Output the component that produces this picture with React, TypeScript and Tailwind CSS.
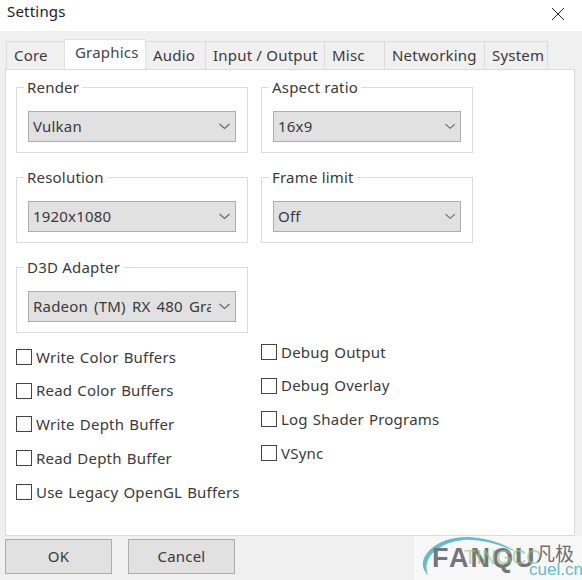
const tabs = ["Core", "Graphics", "Audio", "Input / Output", "Misc", "Networking", "System"];
const tabWidths = [59, 82, 61, 120, 61, 101, 64];

const leftChecks = [
  "Write Color Buffers",
  "Read Color Buffers",
  "Write Depth Buffer",
  "Read Depth Buffer",
  "Use Legacy OpenGL Buffers",
];
const rightChecks = ["Debug Output", "Debug Overlay", "Log Shader Programs", "VSync"];

function Combo({ value }: { value: string }) {
  return (
    <div className="h-[31px] flex items-center justify-between bg-[#e1e1e1] border border-[#adadad] pl-1 pr-[5px] [word-spacing:2px]">
      <span className="overflow-hidden whitespace-nowrap w-[178px]">{value}</span>
      <svg width="11" height="7" viewBox="0 0 11 7" fill="none" stroke="#666" strokeWidth="1.1">
        <path d="M.5 1l5 4.500 5-4.500" />
      </svg>
    </div>
  );
}

function Group({ title, value }: { title: string; value: string }) {
  return (
    <div className="relative h-[66px] border border-[#dcdcdc] pt-[23px] px-[11px]">
      <span className="absolute left-[7px] top-[-10px] h-[18px] leading-[18px] bg-white px-[3px]">{title}</span>
      <Combo value={value} />
    </div>
  );
}

function Check({ label }: { label: string }) {
  return (
    <div className="h-[16px] flex items-center gap-[4px] whitespace-nowrap [word-spacing:1px]">
      <span className="w-[16px] h-[16px] shrink-0 bg-white border border-[#444]" />
      <span>{label}</span>
    </div>
  );
}

export default function App() {
  return (
    <div className="w-[582px] h-[580px] relative overflow-hidden bg-[#f0f0f0] text-[15px] text-[#3a3a3a] font-['Noto_Sans',sans-serif] tracking-[0.2px]">
      <header className="h-[31px] bg-white flex items-center justify-between pl-[7px] pr-[17px] pb-[9px]">
        <span className="text-[#222]">Settings</span>
        <svg width="14" height="14" viewBox="0 0 14 14" stroke="#222" strokeWidth="1" fill="none" className="mt-[5px]">
          <path d="M1 1l12 12M13 1L1 13" />
        </svg>
      </header>

      <div className="pl-[7px] pr-[7px] flex items-end h-[38px]">
        {tabs.map((tab, i) => (
          <div
            key={tab}
            style={{ width: tabWidths[i] }}
            className={
              tab === "Graphics"
                ? "h-[30px] bg-white border border-b-0 border-[#e2e2e2] -ml-px pl-[10px] leading-[25px] z-10 text-[#444] shrink-0"
                : "h-[28px] bg-[#f0f0f0] border border-b-0 border-[#dcdcdc] -ml-px pl-[7px] leading-[26px] shrink-0"
            }
          >
            {tab}
          </div>
        ))}
      </div>

      <main className="w-[570px] h-[467px] ml-[5px] bg-white border border-[#dcdcdc] pl-[10px] pt-[17px]">
        <div className="grid grid-cols-[232px_212px] gap-x-[13px] gap-y-[24px] pb-[24px]">
          <Group title="Render" value="Vulkan" />
          <Group title="Aspect ratio" value="16x9" />
          <Group title="Resolution" value="1920x1080" />
          <Group title="Frame limit" value="Off" />
          <Group title="D3D Adapter" value="Radeon (TM) RX 480 Graphics" />
        </div>
        <div className="grid grid-cols-[245px_1fr] -mt-[20px]">
          <div className="flex flex-col gap-[17.700px] pt-[12px]">
            {leftChecks.map((c) => (
              <Check key={c} label={c} />
            ))}
          </div>
          <div className="flex flex-col gap-[17.700px] pt-[7px]">
            {rightChecks.map((c) => (
              <Check key={c} label={c} />
            ))}
          </div>
        </div>
      </main>

      <footer className="flex gap-[16px] pl-[5px] pt-[3px]">
        <button className="w-[107px] h-[35px] bg-[#e1e1e1] border border-[#adadad] text-center">OK</button>
        <button className="w-[107px] h-[35px] bg-[#e1e1e1] border border-[#adadad] text-center">Cancel</button>
      </footer>

      {/* watermark */}
      <div className="absolute left-[414px] top-[536px] w-[168px] h-[44px] bg-[#f8f8f8] font-['Liberation_Sans',sans-serif] tracking-normal">
        <svg className="absolute left-0 top-0" width="168" height="44" viewBox="0 0 168 44" fill="none">
          <path d="M14 39C-1 26 18 0 55 1C72 2 90 7 102 16C85 8 65 3 50 4C25 6 7 22 14 39Z" fill="#62bccb" />
        </svg>
        <span className="absolute left-[18px] top-[6px] text-[27px] leading-[32px] font-bold text-[#77747a] tracking-[2px]">FANQU</span>
        <span className="absolute left-[50px] top-[9px] text-[20px] leading-[24px] text-[#8ec98a]/70">TINGCO</span>
        <span className="absolute left-[122px] top-[5px] text-[19px] leading-[24px] text-[#6f6b6e] font-['Noto_Sans_CJK_SC',sans-serif]">凡极</span>
        <span className="absolute left-[115px] top-[25px] text-[17px] leading-[18px] text-[#62bccb]">cuel.cn</span>
      </div>
    </div>
  );
}
